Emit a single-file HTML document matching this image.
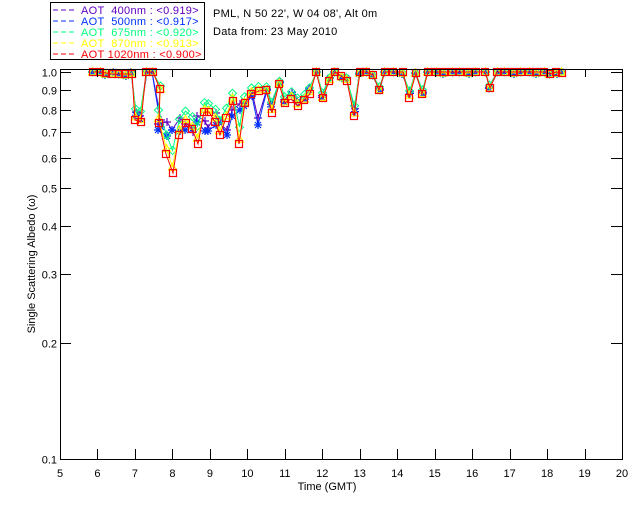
<!DOCTYPE html>
<html><head><meta charset="utf-8"><style>
html,body{margin:0;padding:0;background:#fff;}
svg{display:block;font-family:"Liberation Sans",sans-serif;}
</style></head><body>
<svg id="s" width="640" height="512" viewBox="0 0 640 512" xmlns="http://www.w3.org/2000/svg">
<rect width="640" height="512" fill="#fff"/>
<rect x="50.5" y="2.5" width="154" height="57" fill="none" stroke="#000" stroke-width="1"/>
<g font-size="11" letter-spacing="0.3">
<line x1="53" y1="10" x2="77" y2="10" stroke="#6000c0" stroke-dasharray="5,3"/>
<text x="81" y="14" fill="#6000c0">AOT&#160;&#160;400nm : &lt;0.919&gt;</text>
<line x1="53" y1="21" x2="77" y2="21" stroke="#0030ff" stroke-dasharray="5,3"/>
<text x="81" y="25" fill="#0030ff">AOT&#160;&#160;500nm : &lt;0.917&gt;</text>
<line x1="53" y1="32" x2="77" y2="32" stroke="#00ff80" stroke-dasharray="5,3"/>
<text x="81" y="36" fill="#00ff80">AOT&#160;&#160;675nm : &lt;0.920&gt;</text>
<line x1="53" y1="43" x2="77" y2="43" stroke="#ffff00" stroke-dasharray="5,3"/>
<text x="81" y="47" fill="#ffff00">AOT&#160;&#160;870nm : &lt;0.913&gt;</text>
<line x1="53" y1="54" x2="77" y2="54" stroke="#ff0000" stroke-dasharray="5,3"/>
<text x="81" y="58" fill="#ff0000">AOT 1020nm : &lt;0.900&gt;</text>
<text x="213" y="17" fill="#000">PML, N 50 22', W 04 08', Alt 0m</text>
<text x="213" y="35" fill="#000">Data from: 23 May 2010</text>
</g>
<g id="data"></g>
<g id="axes" stroke="#000" stroke-width="1" fill="none"></g>
<g id="lbl" font-size="11" fill="#000"></g>
<text x="327" y="490" font-size="11" text-anchor="middle">Time (GMT)</text>
<text transform="translate(35,264) rotate(-90)" font-size="11" text-anchor="middle">Single Scattering Albedo (ω)</text>
</svg>
<script>
var NS="http://www.w3.org/2000/svg";
function el(p,t,a,txt){var e=document.createElementNS(NS,t);for(var k in a)e.setAttribute(k,a[k]);if(txt!==undefined)e.textContent=txt;p.appendChild(e);return e;}
var L=60,R=622,T=69,B=459;
function Y(v){return 459-387*(Math.log10(v)+1);}
function X(h){return 60+(h-5)*37.47;}
var ax=document.getElementById('axes'),lb=document.getElementById('lbl');
el(ax,'rect',{x:L+.5,y:T+.5,width:R-L,height:B-T});
for(var h=5;h<=20;h++){var x=Math.round(X(h))+.5;
 if(h>5&&h<20){el(ax,'line',{x1:x,y1:B,x2:x,y2:B-10});el(ax,'line',{x1:x,y1:T,x2:x,y2:T+8});}
 el(lb,'text',{x:X(h),y:477,'text-anchor':'middle'},String(h));}
var ys=[1,.9,.8,.7,.6,.5,.4,.3,.2,.1];
ys.forEach(function(v){var y=Math.round(Y(v))+.5;
 el(ax,'line',{x1:L,y1:y,x2:L+11,y2:y});el(ax,'line',{x1:R-11,y1:y,x2:R,y2:y});
 el(lb,'text',{x:57,y:y+4,'text-anchor':'end'},v.toFixed(1));});
var red=[[93,72],[100,72],[106,73],[112,74],[119,74],[125,74],[132,74],[135,120],[141,122],[146,72],[153,72],[160,89],[159,123],[166,154],[173,173],[179,135],[186,123],[192,129],[198,144],[204,112],[209,112],[215,122],[220,135],[226,118],[233,101],[239,144],[245,103],[251,94],[259,91],[266,90],[272,113],[279,84],[285,103],[291,99],[298,106],[304,100],[310,94],[316,72],[323,98],[329,81],[335,72],[341,76],[347,81],[354,116],[360,72],[366,72],[373,75],[379,90],[385,72],[393,72],[403,72],[409,98],[416,73],[422,94],[428,72],[436,72],[444,72],[452,72],[460,72],[468,72],[476,72],[485,72],[490,88],[497,72],[505,72],[513,72],[521,72],[529,72],[537,72],[544,72],[550,74],[556,72],[562,73]];
var blueDip=[125,132,136,128,133,130,126,124,131,129,127,120,133,118,110,104,98];
var purpDip=[118,126,122,128,120,124,130,118,121,126,115,123,128,112,104,100,94];
function variant(dy,dip,jit){var k=0;return red.map(function(p,i){var y=p[1];
 if(y>76){y=y+dy*(y-72)/60;}
 if(dip&&p[0]>158&&p[0]<262){y=dip[k%dip.length];k++;}
 y+=(i%3-1)*jit; if(y<72)y=72; return [p[0]+(i%2?1:-1)*jit*0.5,y];});}
var series=[
 {c:'#6000c0',d:variant(-10,purpDip,2),m:'plus'},
 {c:'#0030ff',d:variant(-6,blueDip,2),m:'star'},
 {c:'#00ff80',d:variant(-14,0,1),m:'diam'},
 {c:'#ffff00',d:variant(-4,0,1),m:'tri'},
 {c:'#ff0000',d:red,m:'sq'}];
var dg=document.getElementById('data');
series.forEach(function(s){
 el(dg,'polyline',{points:s.d.map(function(p){return p.join(',')}).join(' '),fill:'none',stroke:s.c,'stroke-width':1});
 s.d.forEach(function(p){var x=p[0],y=p[1];
  if(s.m=='sq')el(dg,'rect',{x:x-3.5,y:y-3.5,width:7,height:7,fill:'none',stroke:s.c,'stroke-width':1.2});
  else if(s.m=='tri')el(dg,'path',{d:'M'+x+' '+(y-4)+'L'+(x+4)+' '+(y+3)+'L'+(x-4)+' '+(y+3)+'Z',fill:'none',stroke:s.c,'stroke-width':1.2});
  else if(s.m=='diam')el(dg,'path',{d:'M'+x+' '+(y-4)+'L'+(x+4)+' '+y+'L'+x+' '+(y+4)+'L'+(x-4)+' '+y+'Z',fill:'none',stroke:s.c});
  else if(s.m=='star')el(dg,'path',{d:'M'+(x-4)+' '+y+'H'+(x+4)+'M'+x+' '+(y-4)+'V'+(y+4)+'M'+(x-3)+' '+(y-3)+'L'+(x+3)+' '+(y+3)+'M'+(x+3)+' '+(y-3)+'L'+(x-3)+' '+(y+3),stroke:s.c,'stroke-width':1.2});
  else el(dg,'path',{d:'M'+(x-4)+' '+y+'H'+(x+4)+'M'+x+' '+(y-4)+'V'+(y+4),stroke:s.c,'stroke-width':1.2});
 });});
</script>
</body></html>
